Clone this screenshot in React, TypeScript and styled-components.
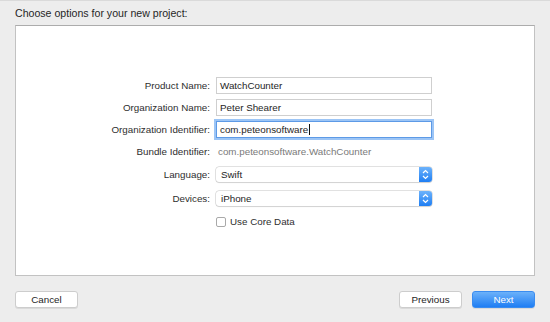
import React from 'react';
import styled, { createGlobalStyle } from 'styled-components';

const GlobalStyle = createGlobalStyle`
  html, body {
    margin: 0;
    padding: 0;
    background: #ededed;
  }
  body {
    font-family: 'Liberation Sans', Arial, Helvetica, sans-serif;
    -webkit-font-smoothing: antialiased;
  }
`;

const Sheet = styled.div`
  width: 550px;
  height: 322px;
  box-sizing: border-box;
  border-top: 1px solid #dadada;
  background: #ededed;
  padding: 6px 15px 0;
  display: flex;
  flex-direction: column;
`;

const Heading = styled.div`
  font-size: 10.6px;
  line-height: 13px;
  color: #262626;
  margin-bottom: 5px;
`;

const Panel = styled.div`
  height: 251px;
  box-sizing: border-box;
  background: #ffffff;
  border: 1px solid #c2c2c2;
  border-top-color: #acacac;
  padding: 51px 0 0 14px;
`;

const Form = styled.div`
  display: grid;
  grid-template-columns: 180px 216px;
  column-gap: 6px;
  row-gap: 5px;
`;

const Label = styled.div<{ $tall?: boolean }>`
  height: ${({ $tall }) => ($tall ? 19 : 17)}px;
  display: flex;
  align-items: center;
  justify-content: flex-end;
  font-size: 9.8px;
  color: #2e2e2e;
  white-space: nowrap;
`;

const Field = styled.div<{ $focused?: boolean }>`
  height: 17px;
  box-sizing: border-box;
  display: flex;
  align-items: center;
  padding: 0 3px;
  background: #fff;
  border: 1px solid ${({ $focused }) => ($focused ? '#5d9ae6' : '#cfcfcf')};
  box-shadow: ${({ $focused }) => ($focused ? '0 0 0 2px #9cc5f6' : 'none')};
  font-size: 9.8px;
  color: #1e1e1e;
  white-space: nowrap;
`;

const Caret = styled.span`
  display: inline-block;
  width: 1px;
  height: 11px;
  background: #111;
  margin-left: 1px;
`;

const StaticValue = styled.div`
  height: 17px;
  display: flex;
  align-items: center;
  padding-left: 2px;
  font-size: 9.8px;
  color: #7a7a7a;
  white-space: nowrap;
`;

const SelectCell = styled.div`
  height: 19px;
  display: flex;
  align-items: center;
`;

const Select = styled.div`
  flex: 1;
  height: 15px;
  display: flex;
  align-items: stretch;
  border-radius: 3px;
  background: #fff;
  box-shadow: 0 0 0 0.5px #c4c4c4, 0 1px 1px rgba(0, 0, 0, 0.12);
  overflow: hidden;
`;

const SelectText = styled.div`
  flex: 1;
  display: flex;
  align-items: center;
  padding-left: 5px;
  font-size: 9.8px;
  color: #1e1e1e;
`;

const Stepper = styled.div`
  width: 13px;
  display: flex;
  align-items: center;
  justify-content: center;
  background: linear-gradient(#6db3fb, #1f7ef3);
`;

const CheckCell = styled.div`
  height: 17px;
  display: flex;
  align-items: center;
  gap: 4px;
  font-size: 9.8px;
  color: #2e2e2e;
`;

const Box = styled.span`
  width: 10px;
  height: 10px;
  box-sizing: border-box;
  border: 1px solid #a9a9a9;
  border-radius: 2px;
  background: #fff;
`;

const Footer = styled.div`
  display: flex;
  align-items: center;
  margin-top: 15px;
`;

const Spacer = styled.div`
  flex: 1;
`;

const Button = styled.button<{ $primary?: boolean }>`
  width: 63px;
  height: 17px;
  padding: 0;
  margin: 0;
  border-radius: 3px;
  font-family: inherit;
  font-size: 9.8px;
  border: 1px solid ${({ $primary }) => ($primary ? '#3a8cf0' : '#cdcdcd')};
  background: ${({ $primary }) =>
    $primary ? 'linear-gradient(#6cb1fa, #1f7ef3)' : '#ffffff'};
  color: ${({ $primary }) => ($primary ? '#ffffff' : '#1e1e1e')};
  box-shadow: 0 1px 0 rgba(0, 0, 0, 0.08);
  & + & {
    margin-left: 10px;
  }
`;

const Chevrons = () => (
  <svg width="7" height="11" viewBox="0 0 7 11">
    <path d="M1 4 L3.5 1.5 L6 4 M1 7 L3.5 9.5 L6 7" fill="none" stroke="#fff" strokeWidth="1.2" />
  </svg>
);

const App = () => {
  return (
    <>
      <GlobalStyle />
      <Sheet>
        <Heading>Choose options for your new project:</Heading>
        <Panel>
          <Form>
            <Label>Product Name:</Label>
            <Field>WatchCounter</Field>

            <Label>Organization Name:</Label>
            <Field>Peter Shearer</Field>

            <Label>Organization Identifier:</Label>
            <Field $focused>
              com.peteonsoftware
              <Caret />
            </Field>

            <Label>Bundle Identifier:</Label>
            <StaticValue>com.peteonsoftware.WatchCounter</StaticValue>

            <Label $tall>Language:</Label>
            <SelectCell>
              <Select>
                <SelectText>Swift</SelectText>
                <Stepper>
                  <Chevrons />
                </Stepper>
              </Select>
            </SelectCell>

            <Label $tall>Devices:</Label>
            <SelectCell>
              <Select>
                <SelectText>iPhone</SelectText>
                <Stepper>
                  <Chevrons />
                </Stepper>
              </Select>
            </SelectCell>

            <div />
            <CheckCell>
              <Box />
              Use Core Data
            </CheckCell>
          </Form>
        </Panel>
        <Footer>
          <Button>Cancel</Button>
          <Spacer />
          <Button>Previous</Button>
          <Button $primary>Next</Button>
        </Footer>
      </Sheet>
    </>
  );
};

export default App;
